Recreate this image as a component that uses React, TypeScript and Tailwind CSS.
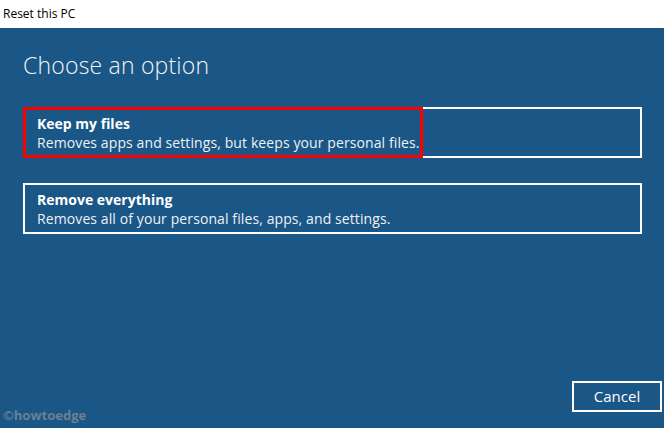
export default function App() {
  const font = { fontFamily: '"Segoe UI", "Open Sans", "Noto Sans", sans-serif' }
  return (
    <div className="flex h-[428px] w-[664px] flex-col overflow-hidden" style={font}>
      <div className="flex h-[28px] items-center bg-white pl-[3px] text-[12px] text-black">
        Reset this PC
      </div>
      <div className="relative flex flex-1 flex-col bg-[#1a5686] pl-[23px] pr-[22px] text-white">
        <h1 className="mt-[22px] text-[23px] font-light leading-[30px] tracking-[0.2px] text-[#f2f5f8]">
          Choose an option
        </h1>
        <div className="mt-[27px] flex flex-col gap-[25px]">
          <div className="relative h-[51px] border-2 border-white px-[12px] pt-[6px]">
            <div className="text-[14px] font-bold leading-[18px]">Keep my files</div>
            <div className="text-[14px] leading-[20px] tracking-[0.1px] text-[#eef2f6]">
              Removes apps and settings, but keeps your personal files.
            </div>
            <div className="absolute -left-[2px] -top-[2px] h-[51px] w-[400px] border-[3px] border-[#ff0000]" />
          </div>
          <div className="h-[51px] border-2 border-white px-[12px] pt-[6px]">
            <div className="text-[14px] font-bold leading-[18px]">Remove everything</div>
            <div className="text-[14px] leading-[20px] tracking-[0.1px] text-[#eef2f6]">
              Removes all of your personal files, apps, and settings.
            </div>
          </div>
        </div>
        <div className="mt-auto mb-[16px] flex items-end justify-between">
          <div className="-mb-[10px] -ml-[20px] text-[13px] font-bold leading-[14px] text-[#6d7f90]">
            ©howtoedge
          </div>
          <button
            type="button"
            className="-mr-[20px] h-[31px] w-[90px] border-2 border-white text-[15px] text-white"
          >
            Cancel
          </button>
        </div>
      </div>
    </div>
  )
}
